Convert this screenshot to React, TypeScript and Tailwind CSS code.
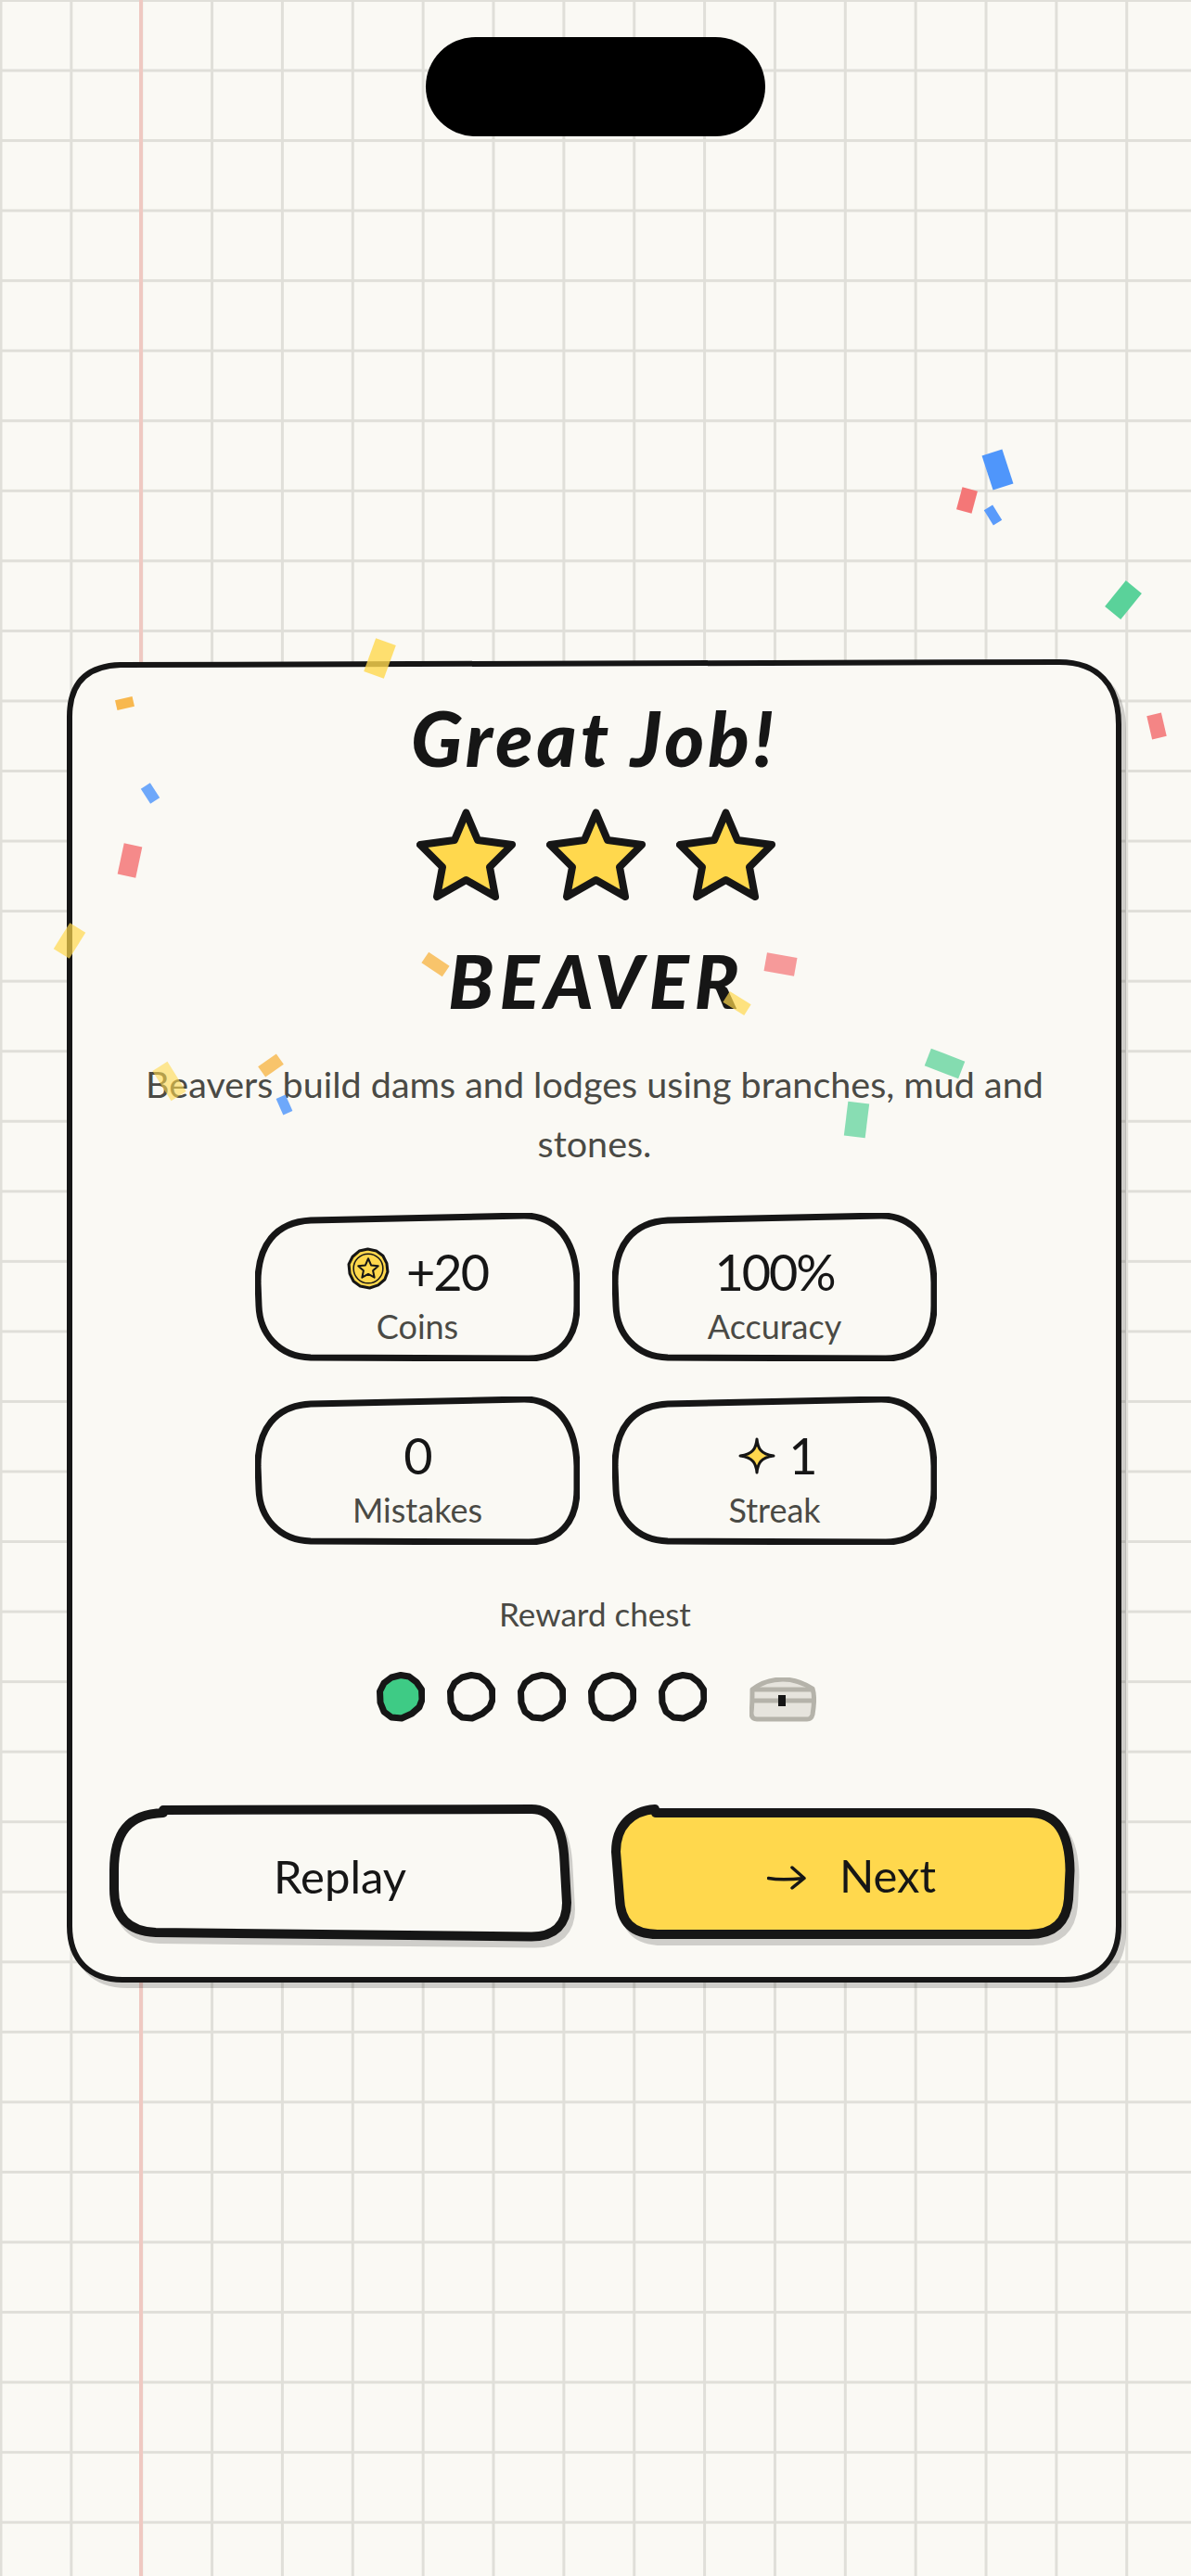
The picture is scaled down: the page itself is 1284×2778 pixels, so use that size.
const INK = '#161616';
const FONT = 'font-["Lato","Noto_Sans",sans-serif]';

const CARD_PATH =
  'M3 62 C3 25 22 7 58 6 L1070 3 C1112 3 1134 28 1134 70 L1134 1366 C1134 1403 1112 1424 1075 1424 L60 1424 C25 1424 3 1403 3 1366 Z';
const REPLAY_PATH =
  'M5 70 C5 30 20 9 58 8 L58 5 L455 4 C478 4 489 25 490.5 60 L493 105 C493 128 480 141.5 455 141.5 L50 137 C20 136 5 120 5 90 Z';
const NEXT_PATH =
  'M5 50 C5 22 22 6 47 4 L48 8 L450 8 C480 8 494 28 494.5 70 L493 101 C491 125 478 139 450 139 L50 139 C22 139 10 125 9 100 Z';

const confetti = [
  { x: 1075, y: 506, w: 23, h: 39, r: -18, c: '#4f96fb' },
  { x: 1042, y: 539, w: 17, h: 25, r: 15, c: '#f47777' },
  { x: 1070, y: 555, w: 11, h: 19, r: -32, c: '#5a9bfb' },
  { x: 1211, y: 647, w: 22, h: 36, r: 39, c: '#5ad29a' },
  { x: 1247, y: 783, w: 16, h: 26, r: -13, c: '#f48585' },
  { x: 841, y: 1040, w: 33, h: 20, r: 10, c: '#f69a9a' },
  { x: 794, y: 1082, w: 27, h: 14, r: 32, c: 'rgba(255,216,77,0.7)' },
  { x: 1018, y: 1147, w: 39, h: 20, r: 21, c: '#84dcb0' },
  { x: 923, y: 1207, w: 23, h: 37, r: 7, c: '#88ddb3' },
  { x: 409, y: 710, w: 23, h: 38, r: 20, c: 'rgba(255,216,77,0.8)' },
  { x: 134, y: 758, w: 19, h: 11, r: -13, c: '#f8b84e' },
  { x: 162, y: 855, w: 12, h: 19, r: -33, c: '#6ea8fa' },
  { x: 140, y: 928, w: 20, h: 34, r: 12, c: '#f58a8a' },
  { x: 75, y: 1014, w: 20, h: 33, r: 32, c: 'rgba(255,216,77,0.7)' },
  { x: 469, y: 1040, w: 27, h: 14, r: 34, c: '#f8c46b' },
  { x: 182, y: 1166, w: 19, h: 38, r: -32, c: 'rgba(255,216,77,0.6)' },
  { x: 292, y: 1149, w: 24, h: 14, r: -35, c: '#f8c46b' },
  { x: 306, y: 1191, w: 11, h: 19, r: -24, c: '#6ea8fa' },
];

function Star() {
  return (
    <svg width="107" height="101" viewBox="0 0 107 101">
      <path
        d="M53.5 4.5 L66 34 L103 39 L79 63 L85 95 L53.5 77 L22 95 L28 63 L4 39 L41 34 Z"
        fill="#ffd84d"
        stroke={INK}
        strokeWidth="8"
        strokeLinejoin="round"
      />
    </svg>
  );
}

function StatBox({ children, label }: { children: React.ReactNode; label: string }) {
  return (
    <div className="relative w-[350px] h-[160px] flex flex-col items-center pt-[40px]">
      <svg className="absolute inset-0" width="350" height="160" viewBox="0 0 350 160" fill="none">
        <path
          d="M3 75 C3 35 22 10 60 8 L290 3 C325 3 346 30 347 75 L347 100 C347 135 328 157 295 157 L60 156 C25 155 5 130 4 100 Z"
          stroke={INK}
          strokeWidth="7"
        />
      </svg>
      <div className="relative flex items-center justify-center h-[48px] text-[54px] leading-none text-[#161616] tracking-[-2px]">
        {children}
      </div>
      <div className="relative mt-[12px] text-[36px] leading-[44px] text-[#4a4a45]">{label}</div>
    </div>
  );
}

function Coin() {
  return (
    <svg width="46" height="46" viewBox="0 0 45 45" className="mr-[18px] -mt-[8px]">
      <path
        d="M22 2 L31 4 L38 9 L42 17 L43 26 L40 34 L33 40 L24 43 L14 41 L7 36 L3 28 L2 18 L6 10 L13 4 Z"
        fill="#ffd84d"
        stroke={INK}
        strokeWidth="3"
        strokeLinejoin="round"
      />
      <circle cx="22.5" cy="22.5" r="15.5" fill="none" stroke={INK} strokeWidth="1.5" />
      <path
        d="M22.5 12 L25.5 19 L33 19.8 L27.5 24.8 L29 32 L22.5 28.3 L16 32 L17.5 24.8 L12 19.8 L19.5 19 Z"
        fill="none"
        stroke={INK}
        strokeWidth="2"
        strokeLinejoin="round"
      />
    </svg>
  );
}

function Sparkle() {
  return (
    <svg width="40" height="40" viewBox="0 0 40 40" className="ml-[6px] mr-[14px]">
      <path
        d="M20 2 C21 12 24 18 38 20 C24 22 21 28 20 38 C19 28 16 22 2 20 C16 18 19 12 20 2 Z"
        fill="#ffd84d"
        stroke={INK}
        strokeWidth="3"
        strokeLinejoin="round"
      />
    </svg>
  );
}

function Dot({ filled }: { filled?: boolean }) {
  return (
    <svg width="52" height="54" viewBox="0 0 52 54">
      <path
        d="M26 3.5 L35 5 L43 11 L48.5 19 L49 30 L46 38 L38 45 L27 50 L16 49 L8 43 L4 33 L3.5 21 L8 12 L16 6 Z"
        fill={filled ? '#3ecb85' : 'none'}
        stroke={INK}
        strokeWidth="7"
        strokeLinejoin="round"
      />
    </svg>
  );
}

function Chest() {
  return (
    <svg width="72" height="48" viewBox="0 0 72 48" fill="none">
      <path
        d="M3 13 C12 6 24 2 36 2 C48 2 60 7 68 12 C70 18 70 28 68 40 C67 44 65 45 62 45 L8 45 C4 45 2 43 2 38 C3 30 3 22 3 13 Z"
        fill="#e6e4dd"
        stroke="#b5b3aa"
        strokeWidth="5"
        strokeLinejoin="round"
      />
      <path d="M4 13 L68 13 M4 25 L68 25" stroke="#b5b3aa" strokeWidth="5" />
      <rect x="31" y="19" width="8" height="12" fill={INK} />
    </svg>
  );
}

export default function App() {
  return (
    <div
      className={`relative w-[1284px] h-[2778px] overflow-hidden bg-[#faf9f4] bg-[linear-gradient(#e0dfd9_3px,transparent_3px),linear-gradient(90deg,#e0dfd9_3px,transparent_3px)] bg-[size:75.87px_75.55px] bg-[position:-0.5px_-1px] ${FONT}`}
    >
      <div className="absolute top-0 bottom-0 left-[150px] w-[4px] bg-[#efc9c2]" />

      <div className="relative flex flex-col items-center pt-[40px]">
        <div className="w-[366px] h-[107px] rounded-full bg-black" />

        <div className="relative mt-[564px] mr-[3px] w-[1137px] h-[1427px] flex flex-col items-center">
          <svg className="absolute inset-0 overflow-visible" width="1137" height="1427" viewBox="0 0 1137 1427" fill="none">
            <path d={CARD_PATH} transform="translate(5 6)" fill="#000" stroke="#000" strokeWidth="6" opacity="0.17" />
            <path d={CARD_PATH} fill="#faf9f4" stroke={INK} strokeWidth="6" />
          </svg>

          <h1 className="relative mt-[36px] text-[82px] leading-[96px] font-black italic tracking-[4px] text-[#161616]">
            Great Job!
          </h1>

          <div className="relative mt-[29px] ml-[4px] flex gap-[33px]">
            <Star />
            <Star />
            <Star />
          </div>

          <div className="relative mt-[36px] ml-[5px] text-[80px] leading-[96px] font-black italic tracking-[6px] text-[#161616]">
            BEAVER
          </div>

          <p className="relative mt-[32px] ml-[1px] w-[1000px] text-center text-[39.5px] leading-[64px] text-[#4a4a45]">
            Beavers build dams and lodges using branches, mud and stones.
          </p>

          <div className="relative mt-[43px] ml-[4px] grid grid-cols-[350px_350px] gap-x-[35px] gap-y-[38px]">
            <StatBox label="Coins">
              <Coin />
              +20
            </StatBox>
            <StatBox label="Accuracy">100%</StatBox>
            <StatBox label="Mistakes">0</StatBox>
            <StatBox label="Streak">
              <Sparkle />1
            </StatBox>
          </div>

          <div className="relative mt-[52px] ml-[2px] text-[35px] leading-[44px] text-[#4a4a45]">Reward chest</div>

          <div className="relative mt-[41px] ml-[5px] flex items-center gap-[24px]">
            <Dot filled />
            <Dot />
            <Dot />
            <Dot />
            <Dot />
            <div className="ml-[22px] mt-[6px]">
              <Chest />
            </div>
          </div>

          <div className="relative mt-[90px] w-full flex justify-between pl-[46px] pr-[50px]">
            <button className="relative w-[497px] h-[146px] flex items-center justify-center pt-[8px] text-[49px] text-[#161616]">
              <svg className="absolute inset-0 overflow-visible" width="497" height="146" viewBox="0 0 497 146" fill="none">
                <path d={REPLAY_PATH} transform="translate(4 7)" fill="#000" stroke="#000" strokeWidth="10" opacity="0.17" />
                <path d={REPLAY_PATH} fill="#faf9f4" stroke={INK} strokeWidth="10" strokeLinejoin="round" />
              </svg>
              <span className="relative">Replay</span>
            </button>
            <button className="relative w-[500px] h-[143px] flex items-center justify-center pt-[8px] pl-[18px] text-[49px] text-[#161616]">
              <svg className="absolute inset-0 overflow-visible" width="500" height="143" viewBox="0 0 500 143" fill="none">
                <path d={NEXT_PATH} transform="translate(5 7)" fill="#000" stroke="#000" strokeWidth="10" opacity="0.17" />
                <path d={NEXT_PATH} fill="#ffd84d" stroke={INK} strokeWidth="10" strokeLinejoin="round" />
              </svg>
              <span className="relative flex items-center gap-[36px]">
                <svg width="42" height="26" viewBox="0 0 42 26" fill="none" className="mt-[4px]">
                  <path d="M1.5 13.5 C12 15.5 26 15 40 13.5 M27 2 L40 13.5 L27 24" stroke={INK} strokeWidth="3.5" strokeLinecap="round" strokeLinejoin="round" />
                </svg>
                Next
              </span>
            </button>
          </div>
        </div>
      </div>

      {confetti.map((p, i) => (
        <div
          key={i}
          className="absolute"
          style={{
            left: p.x - p.w / 2,
            top: p.y - p.h / 2,
            width: p.w,
            height: p.h,
            backgroundColor: p.c,
            transform: `rotate(${p.r}deg)`,
          }}
        />
      ))}
    </div>
  );
}
